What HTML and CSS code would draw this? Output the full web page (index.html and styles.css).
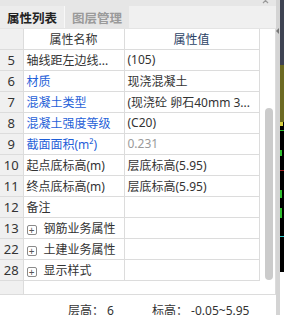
FILE: index.html
```html
<!DOCTYPE html>
<html lang="zh-CN">

<head>
	<meta charset="UTF-8">
	<title>属性列表</title>
	<link rel="stylesheet" href="styles.css">
</head>

<body>
	<div class="app">
		<div class="panel">
			<div class="topbar">
				<svg class="close" viewBox="0 0 8 8" width="8" height="8">
					<path d="M1 -2L6 3M6 -2L1 3" stroke="#9a9a9a" stroke-width="1.2" fill="none" />
				</svg>
			</div>
			<div class="tabs">
				<div class="tab active">属性列表</div>
				<div class="tab">图层管理</div>
			</div>
			<div class="grid-wrap">
				<table class="grid">
					<colgroup>
						<col class="c-num">
						<col class="c-name">
						<col class="c-val">
					</colgroup>
					<thead>
						<tr>
							<th class="num"></th>
							<th>属性名称</th>
							<th>属性值</th>
						</tr>
					</thead>
					<tbody>
						<tr>
							<td class="num">5</td>
							<td>轴线距左边线...</td>
							<td>(105)</td>
						</tr>
						<tr>
							<td class="num">6</td>
							<td class="blue">材质</td>
							<td>现浇混凝土</td>
						</tr>
						<tr>
							<td class="num">7</td>
							<td class="blue">混凝土类型</td>
							<td>(现浇砼 卵石40mm 3...</td>
						</tr>
						<tr>
							<td class="num">8</td>
							<td class="blue">混凝土强度等级</td>
							<td>(C20)</td>
						</tr>
						<tr>
							<td class="num">9</td>
							<td class="blue">截面面积(m²)</td>
							<td class="muted">0.231</td>
						</tr>
						<tr>
							<td class="num">10</td>
							<td>起点底标高(m)</td>
							<td>层底标高(5.95)</td>
						</tr>
						<tr>
							<td class="num">11</td>
							<td>终点底标高(m)</td>
							<td>层底标高(5.95)</td>
						</tr>
						<tr>
							<td class="num">12</td>
							<td>备注</td>
							<td></td>
						</tr>
						<tr>
							<td class="num">13</td>
							<td class="group"><span class="plus">+</span>钢筋业务属性</td>
							<td></td>
						</tr>
						<tr>
							<td class="num">22</td>
							<td class="group"><span class="plus">+</span>土建业务属性</td>
							<td></td>
						</tr>
						<tr>
							<td class="num">28</td>
							<td class="group"><span class="plus">+</span>显示样式</td>
							<td></td>
						</tr>
						<tr class="blank">
							<td class="num"></td>
							<td colspan="2"></td>
						</tr>
					</tbody>
				</table>
				<div class="scroll">
					<div class="thumb"></div>
				</div>
			</div>
			<div class="status">
				<span>层高： 6</span>
				<span>标高： -0.05~5.95</span>
			</div>
		</div>
		<div class="splitter">
			<div class="arrow"></div>
		</div>
		<svg class="canvas" viewBox="0 0 4 315" width="4" height="315" preserveAspectRatio="none">
			<rect x="0" y="0" width="4" height="65" fill="#3e4352" />
			<rect x="0" y="65" width="4" height="57" fill="#6c6a22" />
			<rect x="0" y="122" width="4" height="150" fill="#000" />
			<rect x="0" y="122" width="3" height="4" fill="#d8d040" />
			<rect x="0" y="130" width="4" height="1" fill="#2fbf2f" />
			<rect x="0" y="150" width="2" height="6" fill="#2fbf2f" />
			<rect x="0" y="170" width="4" height="1" fill="#a02020" />
			<rect x="0" y="190" width="2" height="8" fill="#2fbf2f" />
			<rect x="0" y="208" width="2" height="10" fill="#2fbf2f" />
			<rect x="0" y="236" width="4" height="1" fill="#2ccfd0" />
			<rect x="0" y="272" width="4" height="43" fill="#fff" />
		</svg>
	</div>
</body>

</html>
```

FILE: styles.css
```css
* {
	margin: 0;
	padding: 0;
	box-sizing: border-box;
}

:root {
	--line: #dcdcdc;
	--gray-bg: #f0f0f0;
	--text: #333;
	--blue: #1f5fd8;
}

body {
	width: 284px;
	height: 315px;
	overflow: hidden;
	background: #fff;
	color: var(--text);
	font-family: "Noto Sans", "Noto Sans CJK SC", sans-serif;
	font-size: 12px;
}

.app {
	display: flex;
	height: 315px;
}

.panel {
	width: 276px;
	display: flex;
	flex-direction: column;
}

.topbar {
	height: 6px;
	background: #e6e6e6;
	display: flex;
	justify-content: flex-end;
	padding-right: 6px;
	overflow: hidden;
}

.close {
	display: block;
}

.tabs {
	height: 23px;
	background: var(--gray-bg);
	display: flex;
	border-bottom: 1px solid #e4e4e4;
}

.tab {
	width: 65px;
	display: flex;
	align-items: center;
	justify-content: center;
	font-weight: 700;
	font-size: 12.5px;
	color: #9a9a9a;
	background: #e6e6e6;
	border-left: 1px solid #f8f8f8;
}

.tab.active {
	width: 64px;
	color: #222;
	background: #ececec;
	border-left: none;
}

.grid-wrap {
	height: 266px;
	display: flex;
	border-bottom: 1px solid var(--line);
	border-right: 1px solid var(--line);
	overflow: hidden;
}

.grid {
	width: 259px;
	border-collapse: collapse;
	table-layout: fixed;
	align-self: flex-start;
}

.c-num {
	width: 23px;
}

.c-name {
	width: 101px;
}

.c-val {
	width: 135px;
}

.grid th,
.grid td {
	border: 1px solid var(--line);
	height: 21px;
	padding: 0 0 0 3px;
	white-space: nowrap;
	overflow: hidden;
	font-weight: 400;
	text-align: left;
}

.grid tr:first-child th,
.grid tr:first-child td {
	border-top: none;
}

.grid th:first-child,
.grid td:first-child {
	border-left: none;
}

.grid th {
	height: 20px;
	text-align: center;
	padding: 0;
	color: #333;
}

.grid th:last-child {
	color: #2c4366;
}

.grid .num {
	background: var(--gray-bg);
	text-align: center;
	padding: 0;
	font-size: 13px;
	color: #333;
}

.blue {
	color: var(--blue);
}

.muted {
	color: #9a9a9a;
}

.group {
	overflow: visible !important;
}

.plus {
	display: inline-flex;
	align-items: center;
	justify-content: center;
	width: 10px;
	height: 10px;
	border: 1px solid #8a8a8a;
	border-radius: 2px;
	font-size: 10px;
	line-height: 1;
	margin-right: 7px;
	vertical-align: -1px;
	color: #555;
}

.blank td {
	height: 15px;
	border-bottom: none;
}

.blank td:last-child {
	border-right: none;
}

.scroll {
	flex: 1;
	padding: 79px 0 0 5px;
}

.thumb {
	width: 8px;
	height: 172px;
	background: #cbcbcb;
	border-radius: 4px;
}

.status {
	height: 20px;
	display: flex;
	gap: 38px;
	padding: 8px 0 0 68px;
	line-height: 16px;
	color: #333;
	white-space: nowrap;
}

.splitter {
	width: 4px;
	background: #d4d4d4;
	padding-top: 28px;
}

.arrow {
	width: 0;
	height: 0;
	border-top: 3px solid transparent;
	border-bottom: 3px solid transparent;
	border-right: 3px solid #777;
}

.canvas {
	display: block;
}
```
